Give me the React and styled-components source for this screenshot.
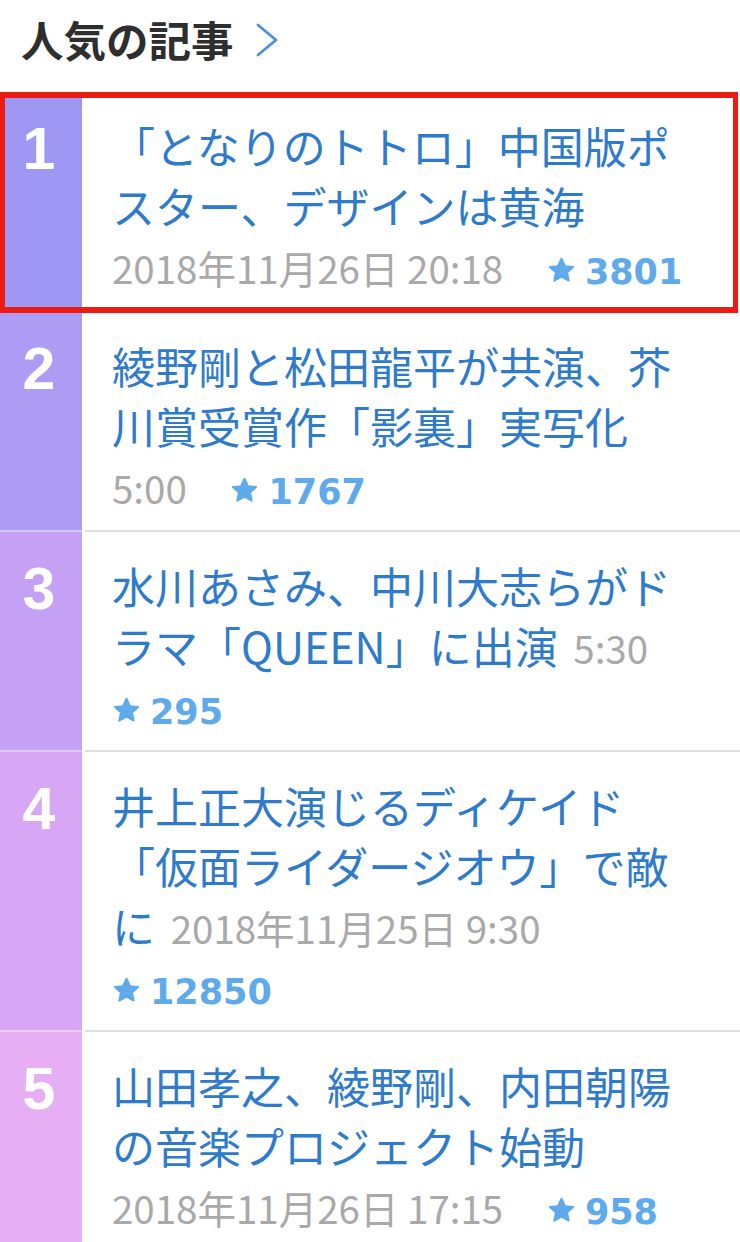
import React from "react";
import styled, { createGlobalStyle } from "styled-components";

const GlobalStyle = createGlobalStyle`
  html, body {
    margin: 0;
    padding: 0;
    background: #ffffff;
  }
  body {
    font-family: "Noto Sans CJK JP", "Noto Sans", sans-serif;
  }
`;

const Page = styled.div`
  width: 740px;
  background: #fff;
  overflow: hidden;
`;

const Header = styled.div`
  height: 92px;
  display: flex;
  align-items: center;
  gap: 20px;
  padding: 0 0 14px 21px;
  box-sizing: border-box;
`;

const HeaderTitle = styled.h2`
  margin: 0;
  font-family: "Noto Sans CJK JP", sans-serif;
  font-size: 42.5px;
  font-weight: 700;
  color: #2e2e2e;
  line-height: 1;
  letter-spacing: 0;
`;

const Chevron = styled.svg`
  width: 26px;
  height: 36px;
  display: block;
  margin-top: 2px;
`;

const List = styled.ol`
  list-style: none;
  margin: 0;
  padding: 0;
`;

const Row = styled.li`
  display: flex;
  position: relative;

  ${(p) =>
    p.$highlight &&
    `
    &::after {
      content: "";
      position: absolute;
      top: 0;
      left: 0;
      right: 2px;
      bottom: -1px;
      border: 6px solid #ec1c12;
      border-left-width: 5px;
      border-right-width: 5px;
      pointer-events: none;
      z-index: 2;
    }
  `}
`;

const Rank = styled.div`
  flex: 0 0 82px;
  width: 82px;
  background: ${(p) => p.$color};
  border-bottom: 2px solid rgba(255, 255, 255, 0.45);
  box-sizing: border-box;
  padding: 28px 4px 0 0;
  text-align: center;
  font-family: "Liberation Sans", Arial, sans-serif;
  font-weight: 700;
  font-size: 59px;
  line-height: 1;
  color: #ffffff;
`;

const Content = styled.div`
  flex: 1;
  margin-left: 3px;
  border-bottom: 2px solid #dedede;
  padding: 23px 36px 15px 27px;
`;

const Text = styled.p`
  margin: 0;
  font-family: "Noto Sans CJK JP", sans-serif;
  font-size: 43px;
  line-height: 60px;
  color: #2f7bcb;
  width: 592px;
`;

const Date = styled.span`
  white-space: nowrap;
  margin-left: 6px;
  font-family: "Noto Sans CJK JP", sans-serif;
  font-size: 38.5px;
  line-height: 1;
  color: #a9a9a9;
  ${(p) => p.$first && `margin-left: 0;`}
`;

const Stars = styled.span`
  white-space: nowrap;
  margin-left: 34px;
  line-height: 1;
  color: #5eaaea;
  ${(p) => p.$first && `margin-left: 0;`}
`;

const StarIcon = styled.svg`
  width: 29px;
  height: 29px;
  vertical-align: -1px;
  margin-right: 9px;
`;

const Count = styled.span`
  font-family: "DejaVu Sans", Verdana, sans-serif;
  font-weight: 700;
  font-size: 35px;
  line-height: 1;
  color: #5eaaea;
`;

const Star = () => (
  <StarIcon viewBox="0 0 24 24">
    <polygon
      points="12,2.2 14.9,8.4 21.6,9.1 16.6,13.7 18,20.4 12,17 6,20.4 7.4,13.7 2.4,9.1 9.1,8.4"
      fill="#5eaaea"
      stroke="#5eaaea"
      strokeWidth="1.6"
      strokeLinejoin="round"
    />
  </StarIcon>
);

const articles = [
  {
    title: "「となりのトトロ」中国版ポスター、デザインは黄海",
    date: "2018年11月26日 20:18",
    stars: "3801",
    color: "#9f97f4",
    dateFirst: true,
  },
  {
    title: "綾野剛と松田龍平が共演、芥川賞受賞作「影裏」実写化",
    date: "5:00",
    stars: "1767",
    color: "#ae9bf3",
    dateFirst: true,
  },
  {
    title: "水川あさみ、中川大志らがドラマ「QUEEN」に出演",
    date: "5:30",
    stars: "295",
    color: "#c4a1f5",
    starsFirst: true,
  },
  {
    title: "井上正大演じるディケイド「仮面ライダージオウ」で敵に",
    date: "2018年11月25日 9:30",
    stars: "12850",
    color: "#d7a7f6",
    starsFirst: true,
  },
  {
    title: "山田孝之、綾野剛、内田朝陽の音楽プロジェクト始動",
    date: "2018年11月26日 17:15",
    stars: "958",
    color: "#e6aff3",
    dateFirst: true,
  },
];

export default function App() {
  return (
    <Page>
      <GlobalStyle />
      <Header>
        <HeaderTitle>人気の記事</HeaderTitle>
        <Chevron viewBox="0 0 26 36">
          <polyline
            points="4,3 22,18 4,33"
            fill="none"
            stroke="#4d8fdc"
            strokeWidth="2.8"
            strokeLinecap="round"
            strokeLinejoin="round"
          />
        </Chevron>
      </Header>
      <List>
        {articles.map((a, i) => (
          <Row key={i} $highlight={i === 0}>
            <Rank $color={a.color}>{i + 1}</Rank>
            <Content>
              <Text>
                {a.title}
                {a.dateFirst ? <br /> : " "}
                <Date $first={a.dateFirst}>{a.date}</Date>
                {a.starsFirst ? <br /> : " "}
                <Stars $first={a.starsFirst}>
                  <Star />
                  <Count>{a.stars}</Count>
                </Stars>
              </Text>
            </Content>
          </Row>
        ))}
      </List>
    </Page>
  );
}
